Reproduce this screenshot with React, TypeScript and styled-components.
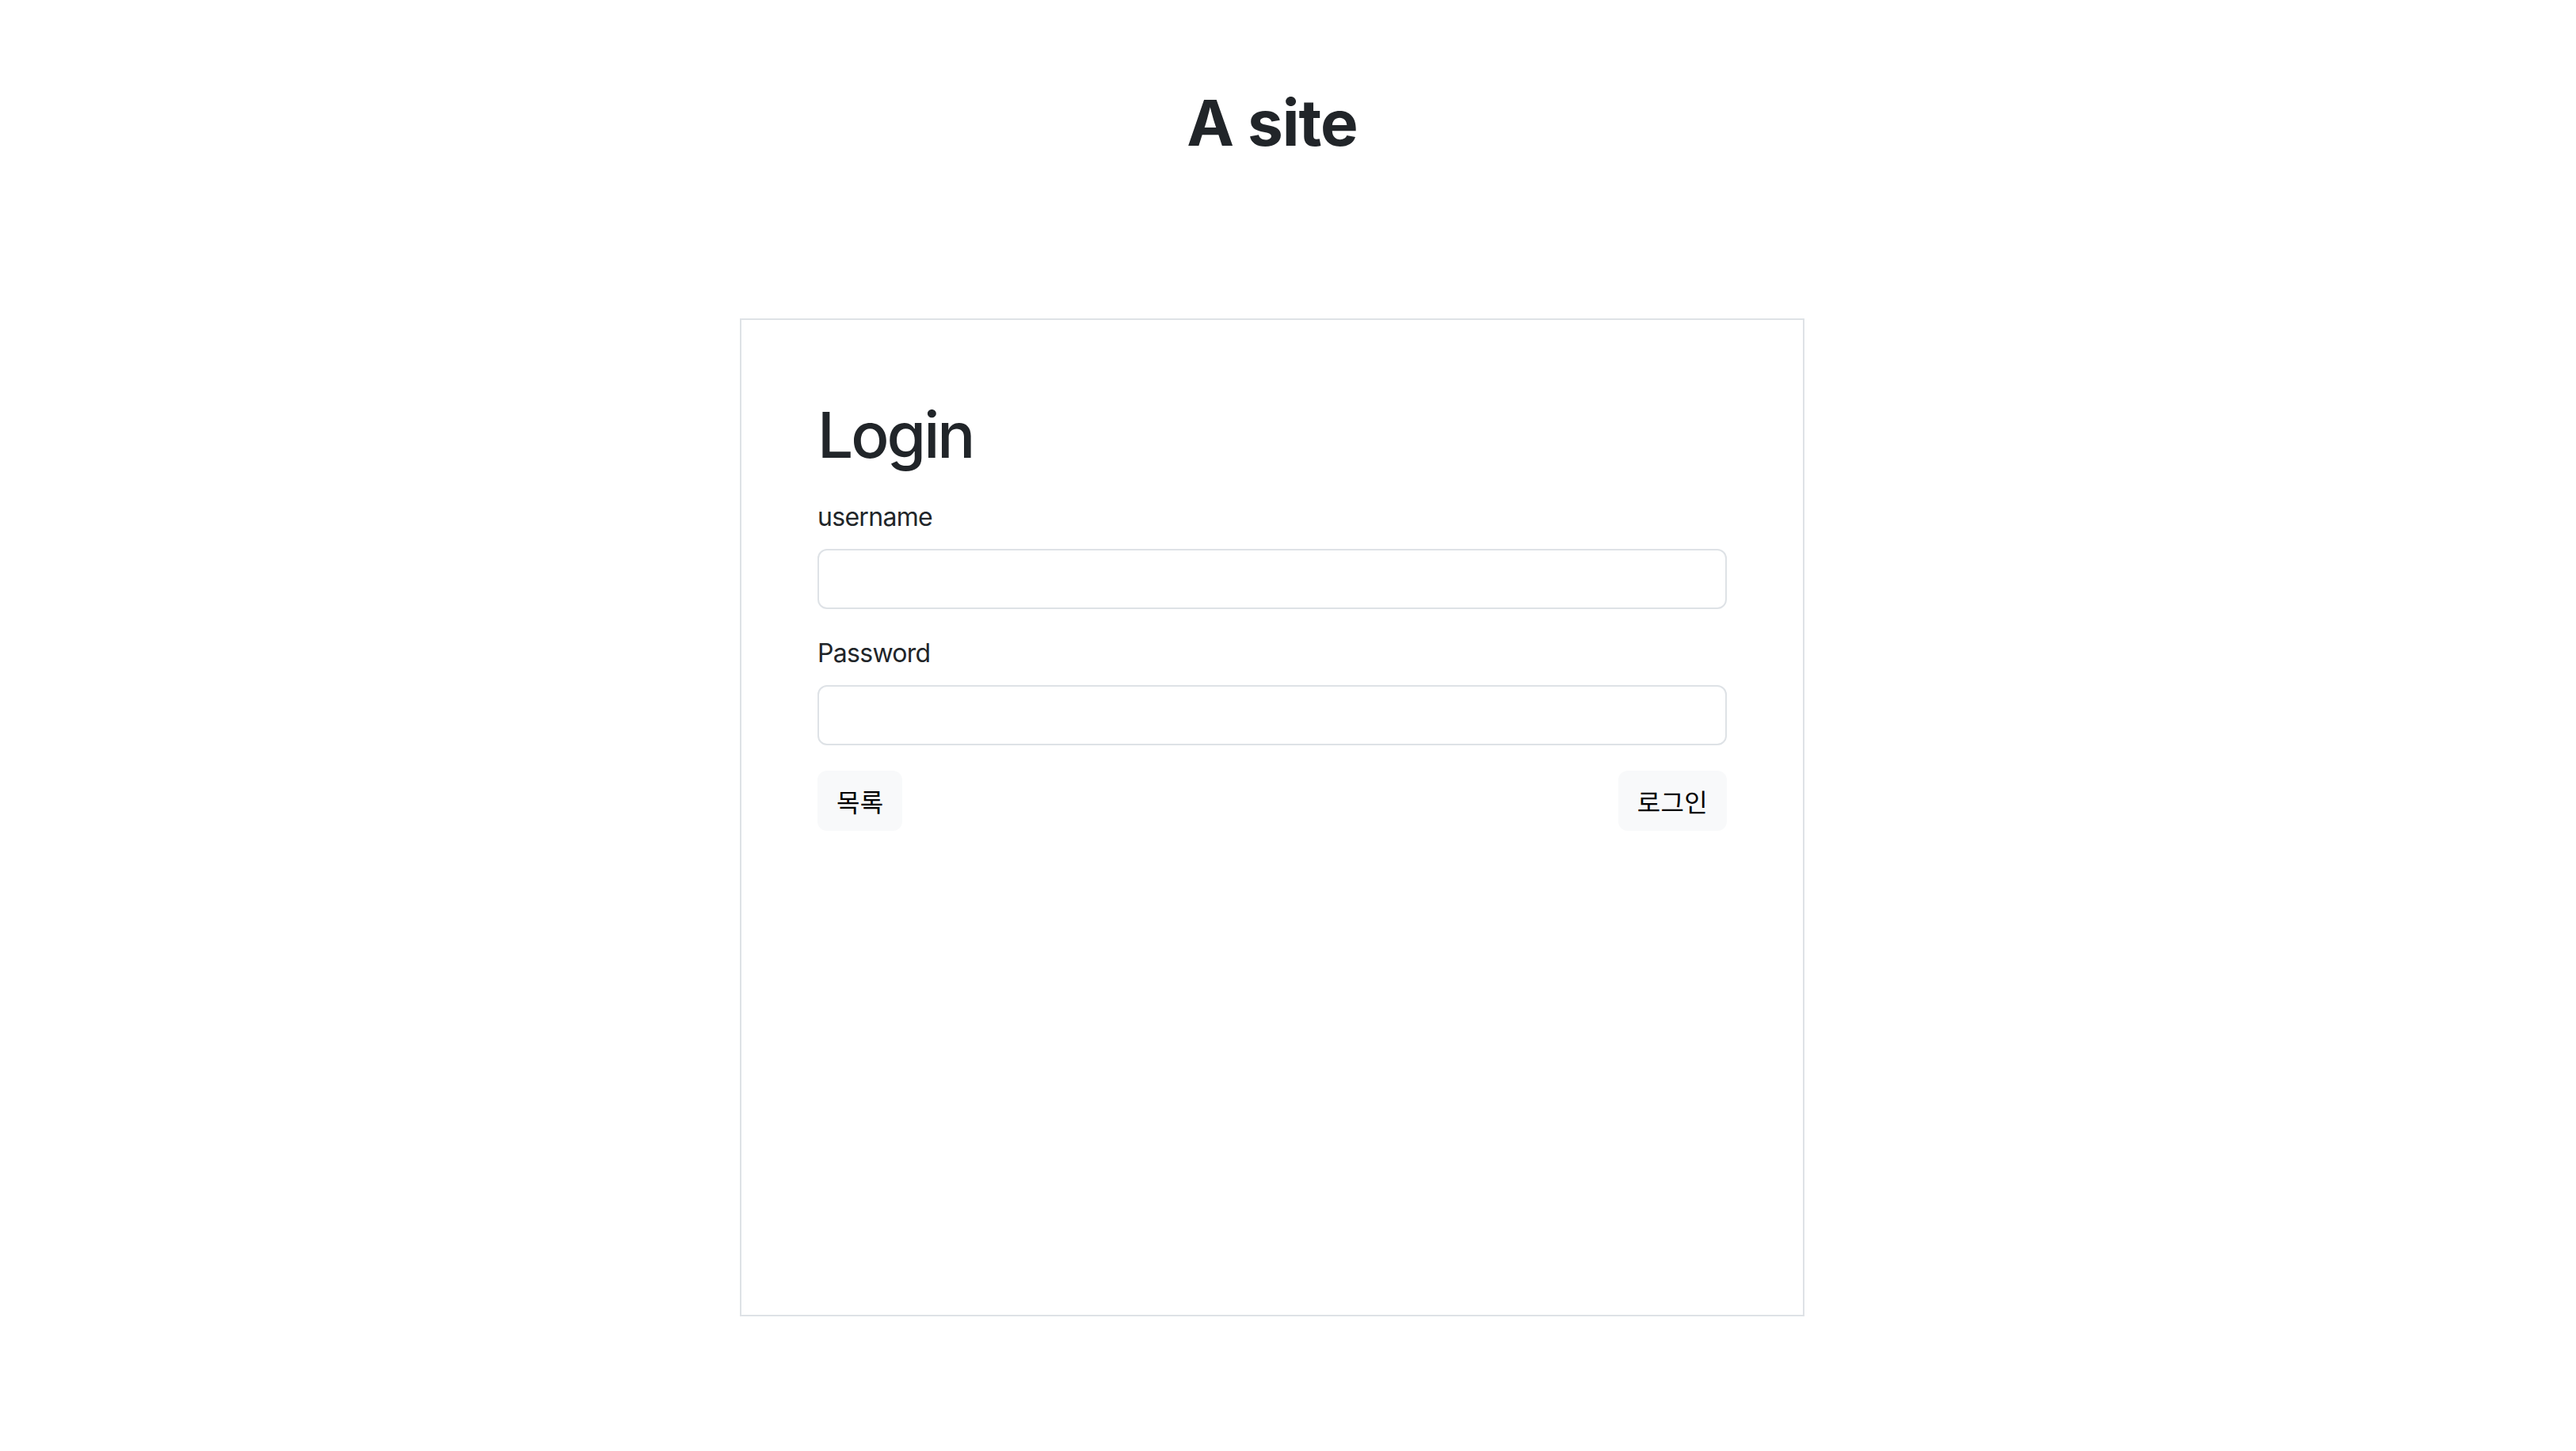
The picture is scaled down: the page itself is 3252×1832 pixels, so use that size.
import React from "react";
import styled, { createGlobalStyle } from "styled-components";

const GlobalStyle = createGlobalStyle`
  html, body {
    margin: 0;
    padding: 0;
    background: #ffffff;
  }
  body {
    font-family: Inter, "Noto Sans", "Noto Sans CJK KR", sans-serif;
    color: #212529;
  }
  * { box-sizing: border-box; }
`;

const Page = styled.div`
  padding-right: 40px;
  display: flex;
  flex-direction: column;
  align-items: center;
`;

const Header = styled.header`
  padding-top: 107px;
  height: 402px;
`;

const SiteTitle = styled.h1`
  margin: 0;
  font-size: 80px;
  line-height: 96px;
  font-weight: 700;
  letter-spacing: -1px;
  color: #212529;
  text-align: center;
`;

const Card = styled.main`
  width: 1344px;
  height: 1260px;
  border: 2px solid #dee2e6;
  padding: 96px;
  display: flex;
  flex-direction: column;
`;

const Heading = styled.h2`
  margin: 1px 0 32px;
  font-size: 80px;
  line-height: 96px;
  font-weight: 500;
  letter-spacing: -3px;
  color: #212529;
`;

const Field = styled.div`
  display: flex;
  flex-direction: column;
  margin-bottom: 32px;
`;

const Label = styled.label`
  font-size: 32px;
  line-height: 48px;
  margin-bottom: 16px;
  letter-spacing: -0.7px;
  color: #212529;
`;

const Input = styled.input`
  height: 76px;
  width: 100%;
  border: 2px solid #dee2e6;
  border-radius: 12px;
  padding: 12px 24px;
  font-size: 32px;
  font-family: inherit;
  background: #fff;
  outline: none;
`;

const Actions = styled.div`
  display: flex;
  justify-content: space-between;
`;

const Button = styled.button`
  height: 76px;
  padding: 0 24px;
  border: none;
  border-radius: 12px;
  background: #f8f9fa;
  color: #000;
  font-family: Inter, "Noto Sans CJK KR", sans-serif;
  font-size: 32px;
  letter-spacing: 0.3px;
  cursor: pointer;
`;

export default function App() {
  return (
    <>
      <GlobalStyle />
      <Page>
        <Header>
          <SiteTitle>A site</SiteTitle>
        </Header>
        <Card>
          <Heading>Login</Heading>
          <Field>
            <Label htmlFor="username">username</Label>
            <Input id="username" type="text" />
          </Field>
          <Field>
            <Label htmlFor="password">Password</Label>
            <Input id="password" type="password" />
          </Field>
          <Actions>
            <Button type="button">목록</Button>
            <Button type="submit">로그인</Button>
          </Actions>
        </Card>
      </Page>
    </>
  );
}
